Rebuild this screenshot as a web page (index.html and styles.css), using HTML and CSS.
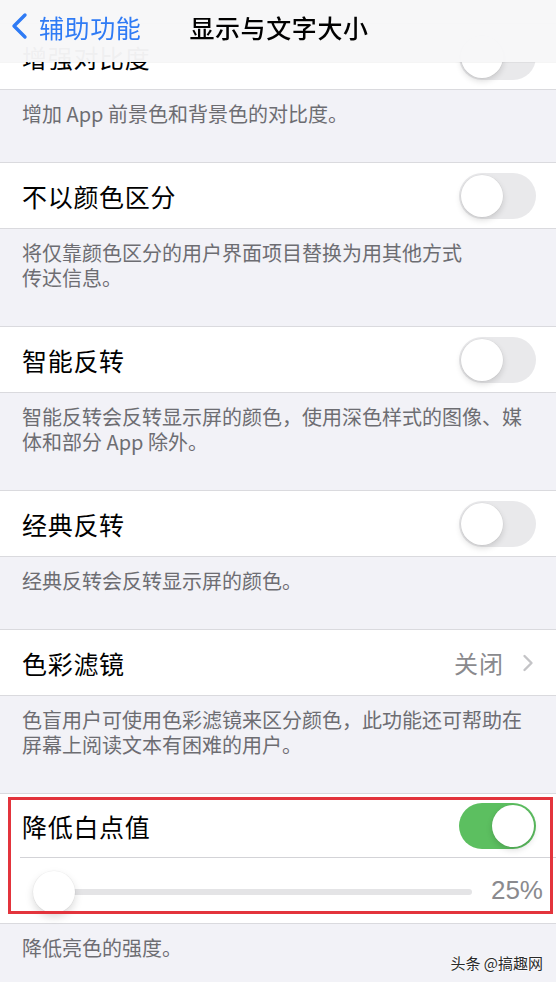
FILE: index.html
```html
<!DOCTYPE html>
<html lang="zh-CN">
  <head>
    <meta charset="UTF-8" />
    <title>显示与文字大小</title>
    <link rel="stylesheet" href="styles.css">
  </head>
  <body>
    <div class="screen">
      <header class="nav">
        <a class="back" href="#">
          <svg width="18" height="28" viewBox="0 0 18 28">
            <path d="M15 3 L4 14 L15 25" fill="none" stroke="#2f7bf5" stroke-width="3.4" stroke-linecap="round" stroke-linejoin="round"/>
          </svg>
          <span>辅助功能</span>
        </a>
        <h1>显示与文字大小</h1>
      </header>

      <section class="group first">
        <div class="row">
          <span class="label">增强对比度</span>
          <span class="switch"></span>
        </div>
      </section>
      <p class="note">增加 App 前景色和背景色的对比度。</p>

      <section class="group">
        <div class="row">
          <span class="label">不以颜色区分</span>
          <span class="switch"></span>
        </div>
      </section>
      <p class="note">将仅靠颜色区分的用户界面项目替换为用其他方式<br>传达信息。</p>

      <section class="group">
        <div class="row">
          <span class="label">智能反转</span>
          <span class="switch"></span>
        </div>
      </section>
      <p class="note">智能反转会反转显示屏的颜色，使用深色样式的图像、媒<br>体和部分 App 除外。</p>

      <section class="group">
        <div class="row">
          <span class="label">经典反转</span>
          <span class="switch"></span>
        </div>
      </section>
      <p class="note">经典反转会反转显示屏的颜色。</p>

      <section class="group">
        <div class="row">
          <span class="label">色彩滤镜</span>
          <span class="detail">关闭</span>
          <svg class="chevron" width="12" height="20" viewBox="0 0 12 20">
            <path d="M2.5 3 L9.5 10 L2.5 17" fill="none" stroke="#c4c4c7" stroke-width="2.4" stroke-linecap="round" stroke-linejoin="round"/>
          </svg>
        </div>
      </section>
      <p class="note">色盲用户可使用色彩滤镜来区分颜色，此功能还可帮助在<br>屏幕上阅读文本有困难的用户。</p>

      <section class="group marked">
        <div class="row short">
          <span class="label">降低白点值</span>
          <span class="switch on"></span>
        </div>
        <div class="row slider-row">
          <div class="slider">
            <span class="track"></span>
            <span class="knob"></span>
          </div>
          <span class="value">25%</span>
        </div>
        <div class="mark"></div>
      </section>
      <p class="note">降低亮色的强度。</p>

      <span class="watermark">头条 @搞趣网</span>
    </div>
  </body>
</html>
```

FILE: styles.css
```css
body {
  margin: 0;
  font-family: "Noto Sans CJK SC", "Noto Sans", sans-serif;
  background: #f2f2f7;
}
.screen {
  position: relative;
  width: 556px;
  height: 982px;
  overflow: hidden;
  background: #f2f2f7;
}
.nav {
  position: sticky;
  top: 0;
  z-index: 2;
  box-sizing: border-box;
  height: 62px;
  padding-bottom: 9px;
  display: flex;
  align-items: center;
  background: rgba(247, 247, 248, 0.97);
  box-shadow: 0 1px 0 rgba(0, 0, 0, 0.04);
}
.back {
  display: flex;
  align-items: center;
  gap: 11px;
  margin-left: 10px;
  color: #2f7bf5;
  text-decoration: none;
  font-size: 25px;
  letter-spacing: 0.6px;
}
.back svg {
  margin-top: -1px;
}
.nav h1 {
  margin: 0 0 0 48px;
  font-size: 25px;
  font-weight: 500;
  letter-spacing: 0.6px;
  color: #000;
}
.group {
  position: relative;
  background: #fff;
  border-top: 1px solid #dadade;
  border-bottom: 1px solid #dadade;
}
.group.first {
  margin-top: -39px;
}
.row {
  box-sizing: border-box;
  height: 65px;
  display: flex;
  align-items: center;
  padding: 0 20px 0 22px;
}
.label {
  flex: 1;
  font-size: 25px;
  letter-spacing: 0.7px;
  color: #000;
}
.switch {
  position: relative;
  width: 77px;
  height: 46px;
  border-radius: 23px;
  background: #e9e9eb;
}
.switch::after {
  content: "";
  position: absolute;
  top: 2px;
  left: 2px;
  width: 42px;
  height: 42px;
  border-radius: 50%;
  background: #fff;
  box-shadow: 0 3px 6px rgba(0, 0, 0, 0.14), 0 0 0 0.5px rgba(0, 0, 0, 0.05);
}
.switch.on {
  background: #5cbf60;
}
.switch.on::after {
  left: 33px;
}
.detail {
  font-size: 24px;
  color: #8a8a8e;
  letter-spacing: 1px;
  margin-right: 18px;
}
.chevron {
  margin-right: 2px;
}
.note {
  margin: 0;
  padding: 11px 0 36px 22px;
  font-size: 20px;
  line-height: 25px;
  white-space: nowrap;
  color: #6d6d72;
}
.row.short {
  height: 63px;
}
.row.slider-row {
  height: 66px;
  margin-left: 20px;
  padding: 0 13px 0 13px;
  border-top: 1px solid #d3d3d7;
}
.slider {
  position: relative;
  flex: 1;
  height: 42px;
  display: flex;
  align-items: center;
  margin-top: 2px;
}
.track {
  flex: 1;
  height: 6px;
  border-radius: 3px;
  background: #e4e4e6;
}
.knob {
  position: absolute;
  left: 0;
  top: 0;
  width: 42px;
  height: 42px;
  border-radius: 50%;
  background: #fff;
  box-shadow: 0 4px 9px rgba(0, 0, 0, 0.15), 0 0 0 0.5px rgba(0, 0, 0, 0.05);
}
.value {
  margin-left: 19px;
  font-family: "Liberation Sans", sans-serif;
  font-size: 26px;
  color: #8a8a8e;
}
.mark {
  position: absolute;
  top: 3px;
  left: 8px;
  right: 3px;
  bottom: 9px;
  border: 3px solid #e3343c;
}
.watermark {
  position: absolute;
  right: 13px;
  bottom: 9px;
  font-size: 15px;
  color: #2a2a2a;
  text-shadow: 0 0 2px #fff, 0 0 2px #fff;
}
```
